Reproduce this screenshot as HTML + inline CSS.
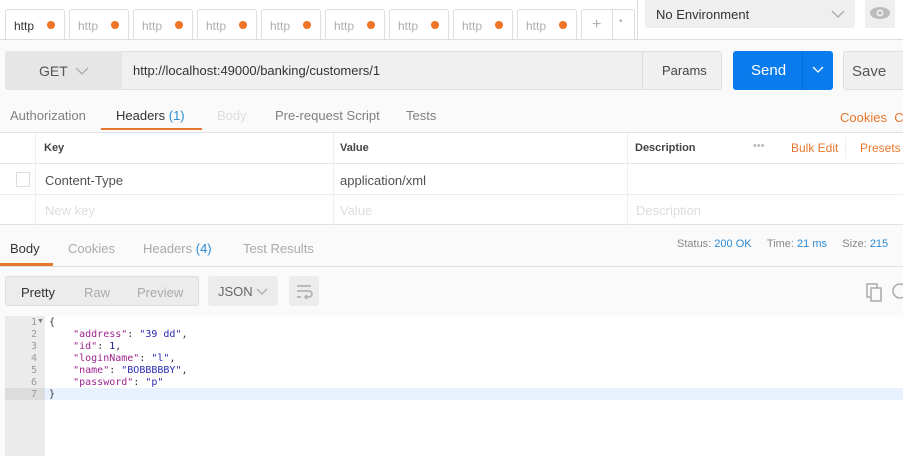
<!DOCTYPE html><html><head><style>
*{box-sizing:border-box;margin:0;padding:0}
body{width:903px;height:456px;overflow:hidden;background:#fff;font-family:"Liberation Sans",sans-serif;font-size:13px;color:#505050;position:relative}
.a{position:absolute}
.tab{position:absolute;top:9px;height:30px;width:60px;border:1px solid #ddd;border-bottom:none;border-radius:3px 3px 0 0;background:#fff;color:#b0b0b0;font-size:12px;padding:9px 0 0 8px}
.tab i{position:absolute;right:9px;top:11px;width:8px;height:8px;border-radius:50%;background:#f07224}
.c{color:#808080}
.o{color:#e8772e}
.b{color:#2a8ad3}
.chev{position:absolute}
</style></head><body>
<div class="a" style="left:0;top:39px;width:903px;height:1px;background:#ddd"></div>
<div class="a" style="left:0;top:40px;width:903px;height:416px;background:#fafafa"></div>
<div class="tab" style="left:5px;color:#333">http<i></i></div>
<div class="tab" style="left:69px">http<i></i></div>
<div class="tab" style="left:133px">http<i></i></div>
<div class="tab" style="left:197px">http<i></i></div>
<div class="tab" style="left:261px">http<i></i></div>
<div class="tab" style="left:325px">http<i></i></div>
<div class="tab" style="left:389px">http<i></i></div>
<div class="tab" style="left:453px">http<i></i></div>
<div class="tab" style="left:517px">http<i></i></div>
<div class="tab" style="left:581px;width:54px;padding:6px 0 0 10px;font-size:16px">+<span style="position:absolute;left:30px;top:0;width:1px;height:30px;background:#ddd"></span><span style="position:absolute;left:37px;top:6px;font-size:10px">•</span></div>
<div class="a" style="left:637px;top:0;width:1px;height:39px;background:#ddd"></div>
<div class="a" style="left:645px;top:0;width:210px;height:28px;background:#efefef;border-radius:0 0 3px 3px;padding:7px 0 0 11px;color:#333">No Environment<svg class="chev" style="left:186px;top:10px" width="14" height="8"><path d="M1 1l6 6 6-6" stroke="#aaa" fill="none" stroke-width="1.3"/></svg></div>
<div class="a" style="left:865px;top:0;width:30px;height:28px;background:#efefef"><svg width="30" height="28"><ellipse cx="15" cy="13" rx="10" ry="6" fill="#bbb"/><circle cx="15" cy="13" r="3.5" fill="#efefef"/><circle cx="15" cy="13" r="1.8" fill="#bbb"/></svg></div>
<div class="a" style="left:5px;top:51px;width:717px;height:39px;background:#f0f0f0;border:1px solid #e0e0e0;border-radius:3px"></div>
<div class="a" style="left:5px;top:51px;width:117px;height:39px;background:#e6e6e6;border-radius:3px 0 0 3px;padding:12px 0 0 34px;font-size:14px;color:#555">GET<svg class="chev" style="left:70px;top:16px" width="14" height="8"><path d="M1 1l6 6 6-6" stroke="#aaa" fill="none" stroke-width="1.3"/></svg></div>
<div class="a" style="left:133px;top:63px;color:#333;font-size:13px">http://localhost:49000/banking/customers/1</div>
<div class="a" style="left:642px;top:51px;width:80px;height:39px;border-left:1px solid #ddd;padding:12px 0 0 19px;color:#444">Params</div>
<div class="a" style="left:733px;top:51px;width:100px;height:39px;background:#097bed;border-radius:3px;color:#fff;font-size:15px;padding:11px 0 0 18px">Send<span style="position:absolute;left:69px;top:0;width:1px;height:39px;background:#0a6bd0"></span><svg class="chev" style="left:79px;top:15px" width="12" height="7"><path d="M1 1l5 5 5-5" stroke="#fff" fill="none" stroke-width="1.3"/></svg></div>
<div class="a" style="left:843px;top:51px;width:70px;height:39px;background:#f0f0f0;border:1px solid #e0e0e0;border-radius:3px;padding:11px 0 0 8px;font-size:15px;color:#555">Save</div>
<div class="a c" style="left:10px;top:108px">Authorization</div>
<div class="a" style="left:116px;top:108px;color:#333">Headers <span class="b">(1)</span></div>
<div class="a" style="left:101px;top:128px;width:101px;height:2px;background:#e8772e"></div>
<div class="a" style="left:217px;top:108px;color:#ddd">Body</div>
<div class="a c" style="left:275px;top:108px">Pre-request Script</div>
<div class="a c" style="left:406px;top:108px">Tests</div>
<div class="a o" style="left:840px;top:110px">Cookies&nbsp;&nbsp;Co</div>
<div class="a" style="left:0;top:132px;width:903px;height:93px;background:#fff;border-top:1px solid #e0e0e0;border-bottom:1px solid #e0e0e0"></div>
<div class="a" style="left:0;top:163px;width:903px;height:1px;background:#e6e6e6"></div>
<div class="a" style="left:0;top:194px;width:903px;height:1px;background:#eee"></div>
<div class="a" style="left:35px;top:133px;width:1px;height:92px;background:#eee"></div>
<div class="a" style="left:333px;top:133px;width:1px;height:92px;background:#eee"></div>
<div class="a" style="left:627px;top:133px;width:1px;height:92px;background:#eee"></div>
<div class="a" style="left:845px;top:137px;width:1px;height:22px;background:#eee"></div>
<div class="a" style="left:44px;top:142px;font-size:11px;font-weight:bold;color:#444">Key</div>
<div class="a" style="left:340px;top:142px;font-size:11px;font-weight:bold;color:#444">Value</div>
<div class="a" style="left:635px;top:142px;font-size:11px;font-weight:bold;color:#444">Description</div>
<div class="a" style="left:753px;top:140px;color:#bbb;font-size:11px">•••</div>
<div class="a o" style="left:791px;top:141px;font-size:12px">Bulk Edit</div>
<div class="a o" style="left:860px;top:141px;font-size:12px">Presets</div>
<div class="a" style="left:16px;top:172px;width:14px;height:15px;border:1px solid #ddd"></div>
<div class="a" style="left:45px;top:173px;color:#505050">Content-Type</div>
<div class="a" style="left:340px;top:173px;color:#505050">application/xml</div>
<div class="a" style="left:45px;top:203px;color:#ddd">New key</div>
<div class="a" style="left:340px;top:203px;color:#ddd">Value</div>
<div class="a" style="left:636px;top:203px;color:#ddd">Description</div>
<div class="a" style="left:10px;top:241px;color:#333">Body</div>
<div class="a" style="left:0;top:263px;width:53px;height:3px;background:#e8772e"></div>
<div class="a" style="left:0;top:266px;width:903px;height:1px;background:#e0e0e0"></div>
<div class="a c" style="left:68px;top:241px;color:#aaa">Cookies</div>
<div class="a" style="left:143px;top:241px;color:#aaa">Headers <span class="b">(4)</span></div>
<div class="a" style="left:243px;top:241px;color:#aaa">Test Results</div>
<div class="a" style="left:677px;top:238px;font-size:11px;color:#888">Status: <span class="b">200 OK</span>&nbsp;&nbsp;&nbsp;&nbsp;&nbsp;Time: <span class="b">21 ms</span>&nbsp;&nbsp;&nbsp;&nbsp;&nbsp;Size: <span class="b">215</span></div>
<div class="a" style="left:5px;top:276px;width:194px;height:30px;background:#ececec;border:1px solid #ddd;border-radius:3px"></div>
<div class="a" style="left:21px;top:285px;color:#333">Pretty</div>
<div class="a" style="left:84px;top:285px;color:#aaa">Raw</div>
<div class="a" style="left:137px;top:285px;color:#aaa">Preview</div>
<div class="a" style="left:208px;top:276px;width:70px;height:30px;background:#ececec;border-radius:3px;padding:8px 0 0 10px;color:#666">JSON<svg class="chev" style="left:48px;top:12px" width="12" height="7"><path d="M1 1l5 5 5-5" stroke="#aaa" fill="none" stroke-width="1.3"/></svg></div>
<div class="a" style="left:289px;top:276px;width:30px;height:30px;background:#ececec;border-radius:3px"><svg width="30" height="30"><path d="M8 10h14M8 15h12a3 3 0 0 1 0 6h-4M8 21h4M18 19l-2 2 2 2" stroke="#aaa" fill="none" stroke-width="1.5"/></svg></div>
<svg class="a" style="left:864px;top:281px" width="39" height="22"><rect x="3" y="3" width="10" height="13" fill="none" stroke="#aaa" stroke-width="1.5"/><rect x="7" y="7" width="10" height="13" fill="#fafafa" stroke="#aaa" stroke-width="1.5"/><circle cx="36" cy="10" r="7" fill="none" stroke="#aaa" stroke-width="1.5"/></svg>
<div class="a" style="left:5px;top:316px;width:40px;height:140px;background:#ebebeb"></div>
<div class="a" style="left:45px;top:316px;width:858px;height:140px;background:#fff"></div>
<div class="a" style="left:5px;top:388px;width:40px;height:12px;background:#dcdcdc"></div>
<div class="a" style="left:45px;top:388px;width:858px;height:12px;background:#e8f2fe"></div>
<pre class="a" style="left:5px;width:32px;top:317px;font-family:'DejaVu Sans Mono',monospace;font-size:10px;line-height:12px;color:#999;text-align:right">1
2
3
4
5
6
7</pre>
<div class="a" style="left:37px;top:318px;font-size:7px;color:#777">▼</div>
<pre class="a" style="left:49px;top:317px;font-family:'DejaVu Sans Mono',monospace;font-size:10px;line-height:12px;color:#333">{
    <span style="color:#a0248f">"address"</span>: <span style="color:#2a2ab0">"39 dd"</span>,
    <span style="color:#a0248f">"id"</span>: <span style="color:#1a1a80">1</span>,
    <span style="color:#a0248f">"loginName"</span>: <span style="color:#2a2ab0">"l"</span>,
    <span style="color:#a0248f">"name"</span>: <span style="color:#2a2ab0">"BOBBBBBY"</span>,
    <span style="color:#a0248f">"password"</span>: <span style="color:#2a2ab0">"p"</span>
}</pre>
</body></html>
